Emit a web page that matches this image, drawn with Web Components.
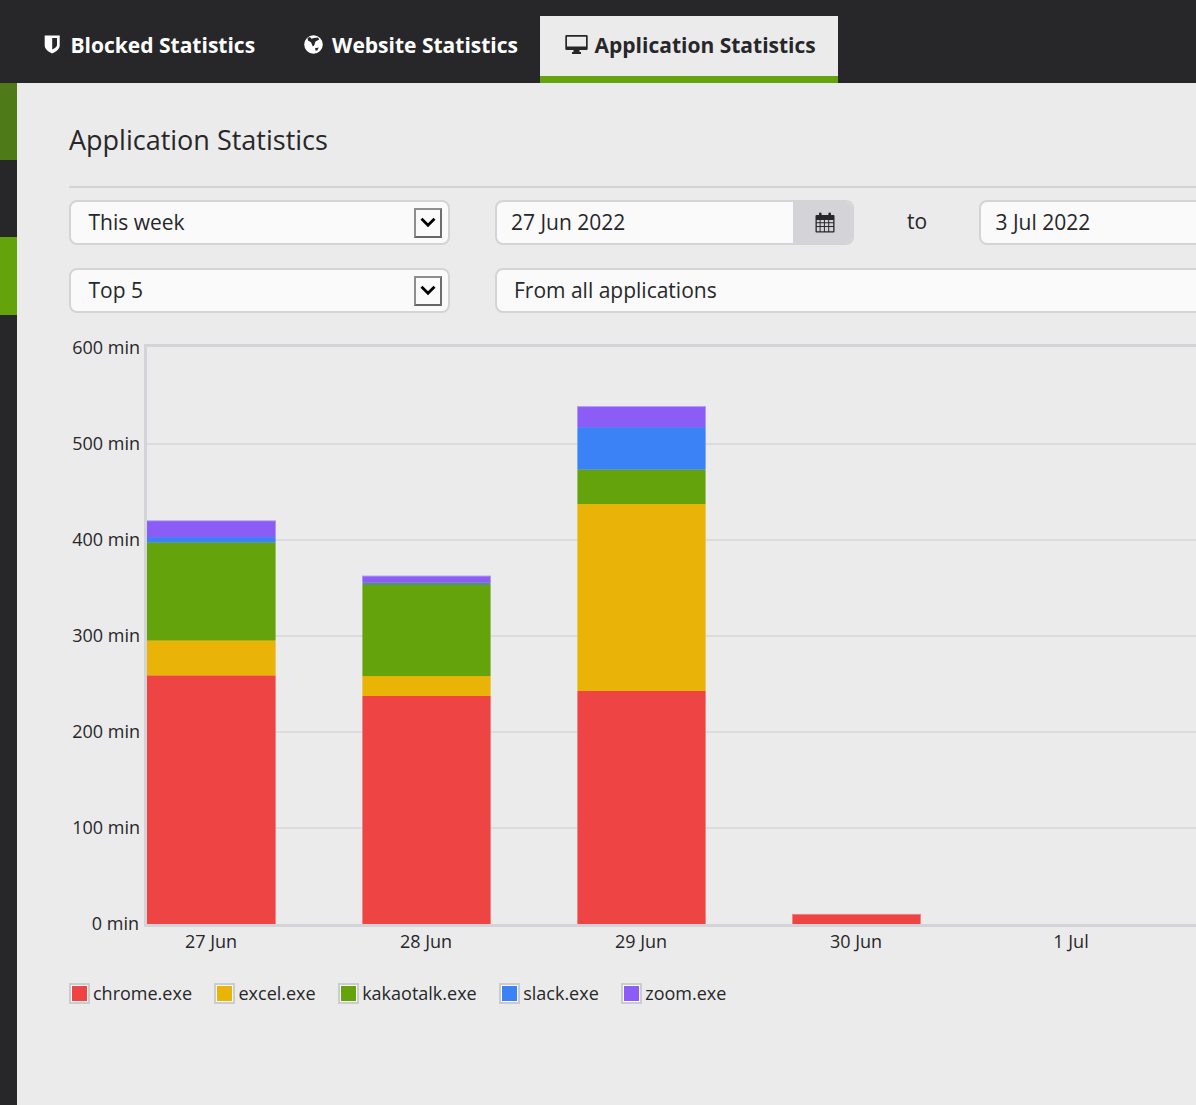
<!DOCTYPE html>
<html>
<head>
<meta charset="utf-8">
<title>Application Statistics</title>
<style>
  html, body { margin: 0; height: 100%; overflow: hidden; }
  body { font-family: "Open Sans", sans-serif; color: #27272a; background: #ebebeb; }
</style>
</head>
<body>
<stats-app>
  <top-bar slot="top">
    <nav-tab icon="shield">Blocked Statistics</nav-tab>
    <nav-tab icon="globe">Website Statistics</nav-tab>
    <nav-tab icon="desktop" active>Application Statistics</nav-tab>
  </top-bar>
  <side-rail slot="side"></side-rail>
  <stats-page heading="Application Statistics">
    <filter-select style="grid-area: a">This week</filter-select>
    <date-field style="grid-area: b" addon>27 Jun 2022</date-field>
    <span style="grid-area: c; justify-self: center; align-self: center; font-size: 21px; margin: -3px 0 0 1px">to</span>
    <date-field style="grid-area: d; padding-left: .5px">3 Jul 2022</date-field>
    <filter-select style="grid-area: e">Top 5</filter-select>
    <text-field style="grid-area: f">From all applications</text-field>
    <bar-chart slot="chart"></bar-chart>
    <chart-legend slot="chart"></chart-legend>
  </stats-page>
</stats-app>

<script>
'use strict';

const ICONS = {
  shield: '<svg width="16" height="19" viewBox="0 0 16 19"><path fill="#fff" fill-rule="evenodd" d="M0.7 0.5H15.7V10.5C15.7 14 12 16.8 8.2 18.5C4.4 16.8 0.7 14 0.7 10.5ZM8.2 3V14.5C10 13.5 13 12 13 10V3Z"/></svg>',
  globe: '<svg width="19" height="19" viewBox="0 0 19 19"><circle cx="9.5" cy="9.5" r="9.3" fill="#fff"/><path fill="#27272a" d="M3.5 3L6 2L7.5 3.8L10 3L14 2.4L15.2 4.5L11.5 6.5L10 10.8L8.7 11.2L7 7.2L4 5.6ZM11 13.2L14.8 12.5L13.2 15.5L11.6 15.8Z"/></svg>',
  desktop: '<svg width="23" height="19" viewBox="0 0 23 19"><path fill="#27272a" fill-rule="evenodd" d="M1.5 0H21.5A1.2 1.2 0 0 1 22.7 1.2V13.8A1.2 1.2 0 0 1 21.5 15H14.5V17H16V19H7V17H8.5V15H1.5A1.2 1.2 0 0 1 0.3 13.8V1.2A1.2 1.2 0 0 1 1.5 0ZM2 1.8V11.5H21V1.8Z"/></svg>',
  calendar: '<svg width="20" height="21" viewBox="0 0 20 21"><path fill="#27272a" fill-rule="evenodd" d="M1.5 3H4V1.8A1.3 1.3 0 0 1 6.6 1.8V3H13.4V1.8A1.3 1.3 0 0 1 16 1.8V3H18.5A1 1 0 0 1 19.5 4V19.5A1 1 0 0 1 18.5 20.5H1.5A1 1 0 0 1 .5 19.5V4A1 1 0 0 1 1.5 3ZM1.8 8V10.2H4.6V8ZM5.6 8V10.2H8.9V8ZM9.9 8V10.2H13.2V8ZM14.2 8V10.2H18.2V8ZM1.8 11.2V14H4.6V11.2ZM5.6 11.2V14H8.9V11.2ZM9.9 11.2V14H13.2V11.2ZM14.2 11.2V14H18.2V11.2ZM1.8 15V19.2H4.6V15ZM5.6 15V19.2H8.9V15ZM9.9 15V19.2H13.2V15ZM14.2 15V19.2H18.2V15Z"/></svg>'
};

// icon box width and left inset, they differ per glyph in the original icon font
const ICON_BOX = { shield: [27.5, 1], globe: [33.5, 5], desktop: [33, 3] };

class StatsApp extends HTMLElement {
  constructor() {
    super();
    this.attachShadow({ mode: 'open' }).innerHTML = `
      <style>
        :host { display: grid; grid-template: 83px 1fr / 17px 1fr; height: 1105px; width: 1196px; overflow: hidden; }
        ::slotted(top-bar) { grid-column: 1 / 3; }
      </style>
      <slot name="top"></slot>
      <slot name="side"></slot>
      <slot></slot>`;
  }
}

class TopBar extends HTMLElement {
  constructor() {
    super();
    this.attachShadow({ mode: 'open' }).innerHTML = `
      <style>
        :host { display: flex; align-items: flex-end; background: #27272a; padding-left: 21px; }
      </style>
      <slot></slot>`;
  }
}

class NavTab extends HTMLElement {
  constructor() {
    super();
    const name = this.getAttribute('icon');
    const [box, inset] = ICON_BOX[name];
    this.attachShadow({ mode: 'open' }).innerHTML = `
      <style>
        :host { display: flex; align-items: center; box-sizing: border-box; height: 67px; padding: 0 21.5px 10px 22px;
          font-size: 21px; font-weight: 700; color: #fff; white-space: nowrap; }
        :host([active]) { background: #ebebeb; color: #27272a; border-bottom: 7px solid #65a30d; padding: 0 22px 3px; }
        svg { display: block; }
        .i { display: flex; flex: none; width: ${box}px; padding-left: ${inset}px; box-sizing: border-box; }
      </style>
      <span class="i">${ICONS[name]}</span><slot></slot>`;
  }
}

class SideRail extends HTMLElement {
  constructor() {
    super();
    this.attachShadow({ mode: 'open' }).innerHTML = `
      <style>
        :host { display: flex; flex-direction: column; background: #27272a; }
        div { height: 77px; }
        .dim { background: #4f7a18; }
        .on { height: 78px; background: #65a30d; }
      </style>
      <div class="dim"></div><div></div><div class="on"></div>`;
  }
}

class StatsPage extends HTMLElement {
  constructor() {
    super();
    this.attachShadow({ mode: 'open' }).innerHTML = `
      <style>
        :host { display: block; min-width: 0; overflow: hidden; background: #ebebeb; padding: 36px 0 0 52px; }
        .inner { width: 1400px; }
        h1 { margin: 0; font-size: 27px; font-weight: 400; line-height: 42px; padding-bottom: 25px; border-bottom: 2px solid #d4d4d8; }
        .filters { display: grid; margin-top: 12px; row-gap: 23px;
          grid-template-columns: 381px 45px 359px 125px 400px;
          grid-template-areas: "a . b c d" "e . f f f"; }
      </style>
      <div class="inner">
        <h1>${this.getAttribute('heading')}</h1>
        <div class="filters"><slot></slot></div>
        <slot name="chart"></slot>
      </div>`;
  }
}

class FilterSelect extends HTMLElement {
  constructor() {
    super();
    this.attachShadow({ mode: 'open' }).innerHTML = `
      <style>
        :host { display: flex; align-items: center; justify-content: space-between; box-sizing: border-box; height: 45px;
          padding: 0 6px 0 17.5px; background: #fafafa; border: 2px solid #d4d4d8; border-radius: 8px; font-size: 21px; }
        .t { margin-top: -2px; }
        .arrow { display: flex; align-items: center; justify-content: center; box-sizing: border-box; width: 28px; height: 30px;
          border: 2px solid; border-color: #8e8e8e #6e6e6e #666 #8e8e8e; background: #fafafa; }
      </style>
      <span class="t"><slot></slot></span>
      <span class="arrow"><svg width="16" height="11" viewBox="0 0 16 11"><path d="M1.5 1.8L8 8.3L14.5 1.8" fill="none" stroke="#000" stroke-width="2.8"/></svg></span>`;
  }
}

class DateField extends HTMLElement {
  constructor() {
    super();
    this.attachShadow({ mode: 'open' }).innerHTML = `
      <style>
        :host { display: flex; box-sizing: border-box; height: 45px; background: #fafafa; border: 2px solid #d4d4d8; border-radius: 8px;
          font-size: 21px; overflow: hidden; }
        .v { flex: 1; display: flex; align-items: center; padding: 0 0 2px 14px; }
        .add { display: flex; align-items: center; justify-content: center; width: 59px; background: #d4d4d8; padding-left: 4px; box-sizing: border-box; }
      </style>
      <span class="v"><slot></slot></span>
      ${this.hasAttribute('addon') ? `<span class="add">${ICONS.calendar}</span>` : ''}`;
  }
}

class TextField extends HTMLElement {
  constructor() {
    super();
    this.attachShadow({ mode: 'open' }).innerHTML = `
      <style>
        :host { display: flex; align-items: center; box-sizing: border-box; height: 45px; padding: 0 0 2px 17px; background: #fafafa;
          border: 2px solid #d4d4d8; border-radius: 8px; font-size: 21px; }
      </style>
      <slot></slot>`;
  }
}

const SERIES = [
  { name: 'chrome.exe', color: '#ef4444' },
  { name: 'excel.exe', color: '#eab308' },
  { name: 'kakaotalk.exe', color: '#65a30d' },
  { name: 'slack.exe', color: '#3b82f6' },
  { name: 'zoom.exe', color: '#8b5cf6' }
];

// minutes per series, per day, read off the y axis (96px = 100 min)
const DAYS = [
  { label: '27 Jun', values: [259, 36.5, 102, 5.5, 17.5] },
  { label: '28 Jun', values: [237.5, 20.8, 94.8, 2.5, 7.3] },
  { label: '29 Jun', values: [242.7, 194.8, 36, 44, 22] },
  { label: '30 Jun', values: [10.5, 0, 0, 0, 0] },
  { label: '1 Jul', values: [0, 0, 0, 0, 0] }
];

class BarChart extends HTMLElement {
  constructor() {
    super();
    this.attachShadow({ mode: 'open' }).innerHTML = `
      <style>
        :host { display: block; margin-top: 18px; height: 643px; }
        svg { display: block; font-family: "Open Sans", sans-serif; font-size: 18px; fill: #27272a; }
      </style>
      <svg width="1400" height="643" id="plot"></svg>`;
  }

  connectedCallback() {
    // svg origin sits at page x 69, y 331
    const left = 78, zero = 593, top = 15, pxPerMin = 0.96, step = 215, barW = 129;
    let out = '';
    for (let m = 100; m <= 500; m += 100) {
      const y = zero - m * pxPerMin;
      out += `<rect x="${left}" y="${y - 1}" width="1322" height="2" fill="#dcdcdf"/>`;
    }
    DAYS.forEach((day, i) => {
      const x = left + i * step;
      // first bar butts against the axis, so no pale edge on its left
      const inL = i === 0 ? 0 : 1;
      let y = zero;
      day.values.forEach((v, s) => {
        if (!v) return;
        const h = v * pxPerMin;
        y -= h;
        const c = SERIES[s].color;
        const topEdge = s === 4 || !day.values[s + 1] ? 1 : 0;
        if (h > 3) {
          // pale 1px edge round a solid fill
          out += `<rect x="${x}" y="${y}" width="${barW}" height="${h}" fill="${c}" fill-opacity=".6"/>`;
          out += `<rect x="${x + inL}" y="${y + topEdge}" width="${barW - 1 - inL}" height="${h - topEdge}" fill="${c}"/>`;
        } else {
          // sliver: only its edge shows, blended with the series below
          out += `<rect x="${x + inL}" y="${y}" width="${barW - 1 - inL}" height="${h}" fill="${SERIES[s - 1].color}"/>`;
          out += `<rect x="${x}" y="${y}" width="${barW}" height="${h}" fill="${c}" fill-opacity=".5"/>`;
        }
      });
      out += `<text x="${x + 64}" y="617" text-anchor="middle">${day.label}</text>`;
    });
    out += `<rect x="75" y="${top - 2}" width="1325" height="3" fill="#d4d4d8"/>`;
    out += `<rect x="75" y="${top - 2}" width="3" height="${zero - top + 5}" fill="#d4d4d8"/>`;
    out += `<rect x="75" y="${zero}" width="1325" height="3" fill="#d4d4d8"/>`;
    for (let m = 0; m <= 600; m += 100) {
      out += `<text x="${m ? 71 : 70}" y="${zero - m * pxPerMin + 6}" text-anchor="end">${m} min</text>`;
    }
    this.shadowRoot.getElementById('plot').innerHTML = out;
  }
}

class ChartLegend extends HTMLElement {
  constructor() {
    super();
    const items = SERIES.map(s => `<span class="item"><i><b style="background:${s.color}"></b></i>${s.name}</span>`).join('');
    this.attachShadow({ mode: 'open' }).innerHTML = `
      <style>
        :host { display: flex; gap: 22.5px; margin-top: 7px; font-size: 18px; }
        .item { display: flex; align-items: center; gap: 3px; }
        i { display: block; box-sizing: border-box; width: 21px; height: 21px; border: 2px solid #ccc; padding: 1px; background: #fafafa; }
        b { display: block; width: 100%; height: 100%; }
      </style>
      ${items}`;
  }
}

customElements.define('stats-app', StatsApp);
customElements.define('top-bar', TopBar);
customElements.define('nav-tab', NavTab);
customElements.define('side-rail', SideRail);
customElements.define('stats-page', StatsPage);
customElements.define('filter-select', FilterSelect);
customElements.define('date-field', DateField);
customElements.define('text-field', TextField);
customElements.define('bar-chart', BarChart);
customElements.define('chart-legend', ChartLegend);
</script>
</body>
</html>
